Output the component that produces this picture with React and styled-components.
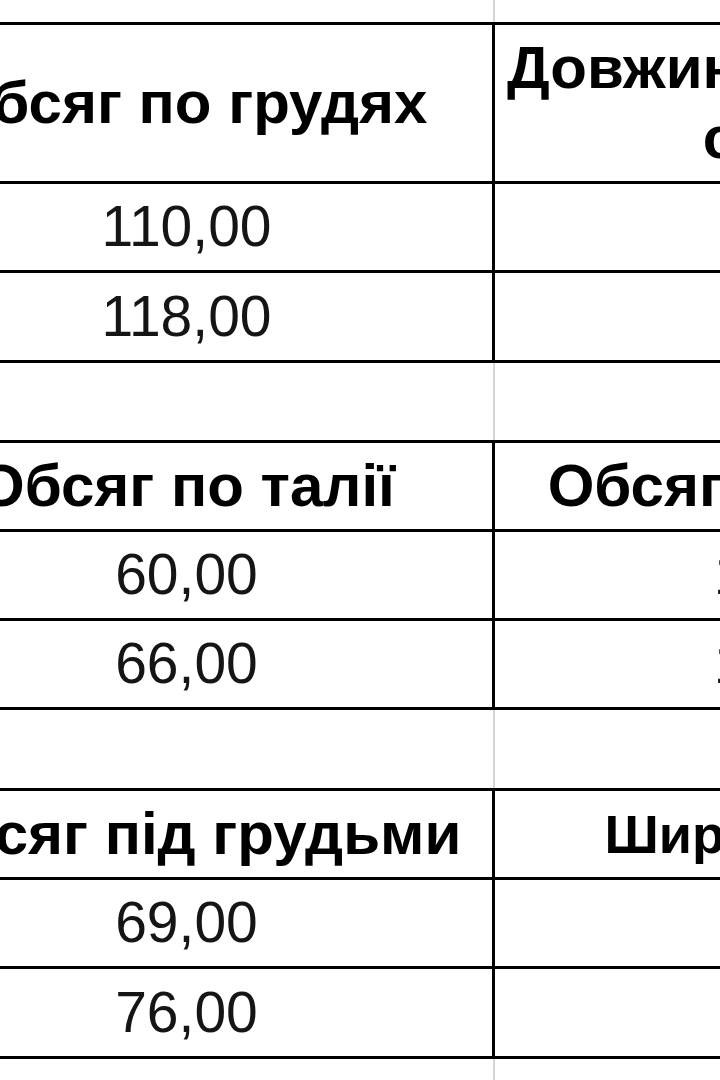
import React from "react";
import styled, { createGlobalStyle } from "styled-components";

/* ======================
   GLOBAL
====================== */

const GlobalStyle = createGlobalStyle`
  html, body {
    margin: 0;
    padding: 0;
    background: #ffffff;
  }
`;

/* ======================
   STYLED COMPONENTS
====================== */

const Page = styled.div`
  width: 720px;
  height: 1080px;
  overflow: hidden;
  background: #ffffff;
`;

// the sheet is scrolled a little to the right, so its first column starts off screen
const Sheet = styled.div`
  margin-left: -119px;
  width: 1226px;
  display: flex;
  flex-direction: column;
`;

const GapRow = styled.div`
  display: grid;
  grid-template-columns: 614px 612px;
  height: ${(p) => p.$h}px;
`;

const GridCell = styled.div`
  box-sizing: border-box;
  border-right: ${(p) => (p.$first ? "2px solid #d6d6d6" : "none")};
`;

const Table = styled.div`
  display: grid;
  grid-template-columns: 614px 612px;
  border-top: 3px solid #000;
`;

const Cell = styled.div`
  box-sizing: border-box;
  height: ${(p) => p.$h}px;
  border-bottom: 3px solid #000;
  border-right: ${(p) => (p.$first ? "3px solid #000" : "none")};
  display: flex;
  align-items: center;
  justify-content: center;
  text-align: center;
  white-space: nowrap;
  font-family: "Liberation Sans", Arial, sans-serif;
  font-size: ${(p) => p.$size || (p.$head ? 60 : 57)}px;
  font-weight: ${(p) => (p.$head ? 700 : 400)};
  line-height: ${(p) => (p.$head ? "70px" : "1.15")};
  color: ${(p) => (p.$head ? "#000" : "#151515")};
`;

/* ======================
   DATA
====================== */

const tables = [
  {
    gap: 22,
    headH: 159,
    rowH: [89, 90],
    head: [{ text: "Обсяг по грудях" }, { text: ["Довжина виробу по", "спинці"] }],
    rows: [
      ["110,00", "60,00"],
      ["118,00", "62,00"],
    ],
  },
  {
    gap: 77,
    headH: 89,
    rowH: [89, 89],
    head: [{ text: "Обсяг по талії" }, { text: "Обсяг по стегнах" }],
    rows: [
      ["60,00", "100,00"],
      ["66,00", "106,00"],
    ],
  },
  {
    gap: 78,
    headH: 89,
    rowH: [89, 90],
    head: [{ text: "Обсяг під грудьми" }, { text: "Ширина спини", size: 54 }],
    rows: [
      ["69,00", "38,00"],
      ["76,00", "40,00"],
    ],
  },
];

const HeadText = ({ text }) =>
  Array.isArray(text) ? (
    <span>
      {text[0]}
      <br />
      {text[1]}
    </span>
  ) : (
    text
  );

/* ======================
   COMPONENT
====================== */

const SizeTable = ({ t }) => (
  <>
    <GapRow $h={t.gap}>
      <GridCell $first />
      <GridCell />
    </GapRow>
    <Table>
      {t.head.map((h, i) => (
        <Cell key={i} $head $first={i === 0} $h={t.headH} $size={h.size}>
          <HeadText text={h.text} />
        </Cell>
      ))}
      {t.rows.map((row, r) =>
        row.map((v, i) => (
          <Cell key={`${r}-${i}`} $first={i === 0} $h={t.rowH[r]}>
            {v}
          </Cell>
        ))
      )}
    </Table>
  </>
);

const App = () => (
  <Page>
    <GlobalStyle />
    <Sheet>
      {tables.map((t, i) => (
        <SizeTable key={i} t={t} />
      ))}
      <GapRow $h={40}>
        <GridCell $first />
        <GridCell />
      </GapRow>
    </Sheet>
  </Page>
);

export default App;
